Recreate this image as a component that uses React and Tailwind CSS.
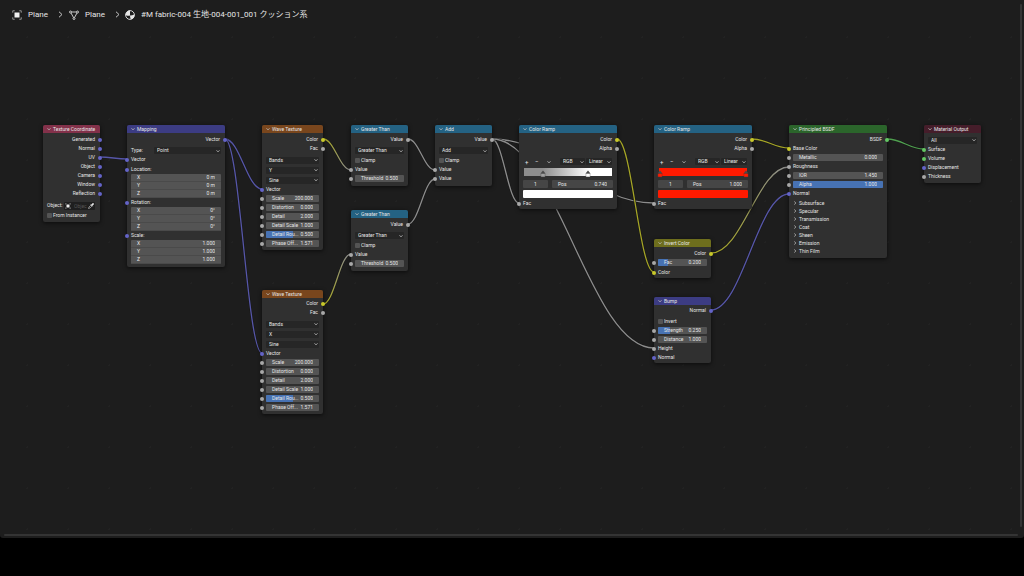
import React, { useId } from "react";

const SOCKET = {
  gray: "bg-[#a8a8a8]",
  vector: "bg-[#6464c8]",
  color: "bg-[#c8c82a]",
  shader: "bg-[#63c763]",
};

const WIRE = { gray: "#8c8c8c", vector: "#5656a8", color: "#a5a526", shader: "#4f9f4f" };

function Socket({ side, type }) {
  return (
    <span
      className={`absolute top-1/2 h-1 w-1 -translate-y-1/2 rounded-full ${
        side === "in" ? "-left-0.5" : "-right-0.5"
      } ${SOCKET[type]}`}
    />
  );
}

function Chevron({ className = "" }) {
  return (
    <svg viewBox="0 0 8 8" className={`h-1 w-1 shrink-0 ${className}`} fill="none" stroke="#bdbdbd" strokeWidth="1.6" aria-hidden="true">
      <path d="M1 2.5 4 5.8 7 2.5" />
    </svg>
  );
}

function Node({ x, y, width, title, head, tight, bottom = "pb-0.5", children }) {
  return (
    <section
      className={`absolute rounded-[2px] bg-[#303030] shadow-[0_1px_4px_rgba(0,0,0,0.65)] ${width} ${bottom}`}
      style={{ left: x, top: y }}
    >
      <button
        type="button"
        className={`flex h-2 w-full items-center gap-0.5 rounded-t-[2px] pl-1 text-left whitespace-nowrap ${head} ${tight ? "mb-px" : "mb-0.5"}`}
      >
        <Chevron />
        {title}
      </button>
      {children}
    </section>
  );
}

function Out({ type = "gray", children }) {
  return (
    <div className="relative flex h-[9px] items-center justify-end pr-[5px]">
      {children}
      <Socket side="out" type={type} />
    </div>
  );
}

function In({ type = "gray", className = "", children }) {
  return (
    <div className={`relative flex h-[9px] items-center pl-1 ${className}`}>
      {children}
      <Socket side="in" type={type} />
    </div>
  );
}

function Menu({ label, value, className = "" }) {
  return (
    <span className={`relative flex h-[7px] items-center rounded-[1px] bg-[#262626] ${className}`}>
      <select aria-label={label} defaultValue={value} className="h-[7px] w-full appearance-none bg-transparent pr-1 pl-[3px] outline-none">
        <option>{value}</option>
      </select>
      <Chevron className="pointer-events-none absolute right-px" />
    </span>
  );
}

function MenuRow({ label, value, className = "h-[10px]" }) {
  return (
    <div className={`flex items-center px-1 ${className}`}>
      <Menu label={label} value={value} className="flex-1" />
    </div>
  );
}

function Check({ children, className = "" }) {
  return (
    <label className={`flex h-[9px] items-center gap-px pl-1 whitespace-nowrap ${className}`}>
      <input type="checkbox" className="h-[5px] w-[5px] shrink-0 appearance-none rounded-[1px] bg-[#545454]" />
      {children}
    </label>
  );
}

function Field({ label, value, fill, className = "h-[7px] rounded-[1px]" }) {
  const id = useId();
  return (
    <span className={`relative flex w-full items-start overflow-hidden bg-[#545454] px-[6px] ${className}`}>
      {fill ? <span className="absolute inset-y-0 left-0 bg-[#4772b3]" style={{ width: `${fill * 100}%` }} /> : null}
      <label htmlFor={id} className="relative w-0 flex-1 leading-[6px] whitespace-nowrap">
        {label}
      </label>
      <input id={id} defaultValue={value} className="relative h-[6px] w-5 bg-transparent text-right leading-[6px] outline-none" />
    </span>
  );
}

function FieldRow({ label, value, fill }) {
  return (
    <div className="relative flex h-[9px] items-center px-1">
      <Field label={label} value={value} fill={fill} />
      <Socket side="in" type="gray" />
    </div>
  );
}

function VectorGroup({ values }) {
  return (
    <div className="mx-1 overflow-hidden rounded-[1px]">
      {["X", "Y", "Z"].map((axis, i) => (
        <Field key={axis} label={axis} value={values[i]} className="h-2 border-b border-[#4a4a4a]" />
      ))}
    </div>
  );
}

function WaveTexture({ x, y, direction, tight }) {
  return (
    <Node x={x} y={y} width="w-[61px]" title="Wave Texture" head="bg-[#79461d]" tight={tight}>
      <Out type="color">Color</Out>
      <Out>Fac</Out>
      <div className="pt-0.5">
        <MenuRow label="Wave type" value="Bands" />
        <MenuRow label="Direction" value={direction} />
        <MenuRow label="Profile" value="Sine" />
      </div>
      <In type="vector">Vector</In>
      <FieldRow label="Scale" value="200.000" />
      <FieldRow label="Distortion" value="0.000" />
      <FieldRow label="Detail" value="2.000" />
      <FieldRow label="Detail Scale" value="1.000" />
      <FieldRow label="Detail Rou..." value="0.500" fill={0.5} />
      <FieldRow label="Phase Off..." value="1.571" />
    </Node>
  );
}

function MathNode({ x, y, operation, children }) {
  return (
    <Node x={x} y={y} width="w-[57px]" title={operation} head="bg-[#246283]" bottom="pb-[3px]">
      <Out>Value</Out>
      <MenuRow label="Operation" value={operation} className="mt-0.5 h-[9px]" />
      <Check className="mt-px">Clamp</Check>
      <In>Value</In>
      {children}
    </Node>
  );
}

function Stop({ at, color }) {
  return (
    <svg viewBox="0 0 10 18" className="absolute top-px h-[9px] w-[5px] -translate-x-1/2" style={{ left: `${at * 100}%` }} aria-hidden="true">
      <path d="M5 3 10 9H0Z" fill="#4a4a4a" />
      <path d="M0.5 9h9v7h-9Z" fill={color} stroke="#3a3a3a" strokeWidth="1" />
    </svg>
  );
}

function ColorRamp({ x, y, pos, band, swatch, stops }) {
  const id = useId();
  return (
    <Node x={x} y={y} width="w-[98px]" title="Color Ramp" head="bg-[#246283]" bottom="pb-px">
      <Out type="color">Color</Out>
      <Out>Alpha</Out>
      <div className="mt-1 flex h-[9px] items-center pr-[5px] pl-[6px]">
        <button type="button" aria-label="Add stop" className="w-[10px] text-left text-[6px]">+</button>
        <button type="button" aria-label="Remove stop" className="w-3 text-left text-[6px]">−</button>
        <button type="button" aria-label="Ramp tools" className="flex-1"><Chevron /></button>
        <Menu label="Color mode" value="RGB" className="w-[25px]" />
        <Menu label="Interpolation" value="Linear" className="ml-px w-[26px]" />
      </div>
      <div className={`relative mx-[5px] mt-0.5 h-2 ${band}`}>
        {stops.map((s) => (
          <Stop key={s.at} at={s.at} color={s.color} />
        ))}
      </div>
      <div className="mt-1 flex gap-1 px-1">
        <span className="flex h-2 w-[25px] items-center rounded-[1px] bg-[#464646]">
          <input aria-label="Active stop" defaultValue="1" className="h-[6px] w-full bg-transparent text-center leading-[6px] outline-none" />
        </span>
        <span className="flex h-2 flex-1 items-center rounded-[1px] bg-[#464646] px-[6px]">
          <label htmlFor={id} className="flex-1 leading-[6px]">Pos</label>
          <input id={id} defaultValue={pos} className="h-[6px] w-5 bg-transparent text-right leading-[6px] outline-none" />
        </span>
      </div>
      <button type="button" aria-label="Stop color" className={`mx-1 mt-0.5 block h-2 w-[90px] rounded-[1px] ${swatch}`} />
      <In className="mt-px">Fac</In>
    </Node>
  );
}

function ObjectIcon({ className }) {
  return (
    <svg viewBox="0 0 20 20" className={className} fill="none" stroke="currentColor" strokeWidth="1.6" aria-hidden="true">
      <path d="M1.5 5.5v-4h4M14.5 1.5h4v4M18.5 14.5v4h-4M5.5 18.5h-4v-4" opacity="0.7" />
      <rect x="5" y="5" width="10" height="10" fill="#f0f0f0" stroke="none" />
    </svg>
  );
}

function MeshIcon() {
  return (
    <svg viewBox="0 0 20 20" className="h-[10px] w-[10px]" fill="none" stroke="currentColor" strokeWidth="1.7" aria-hidden="true">
      <path d="M5 4h10M4 6l5 9M16 6l-5 9" />
      <circle cx="3" cy="4" r="2" />
      <circle cx="17" cy="4" r="2" />
      <circle cx="10" cy="17" r="2" />
    </svg>
  );
}

function MaterialIcon() {
  return (
    <svg viewBox="0 0 20 20" className="h-[10px] w-[10px]" aria-hidden="true">
      <circle cx="10" cy="10" r="8.8" fill="#1d1d1d" stroke="#e6e6e6" strokeWidth="1.8" />
      <path d="M10 1.2A8.8 8.8 0 0 0 1.2 10q4.4 2.6 8.8 1.2Z" fill="#e6e6e6" />
      <path d="M10 11.2q4.6-.2 8.6-2.4A8.8 8.8 0 0 1 11.5 18.6Q10.2 15 10 11.2Z" fill="#e6e6e6" />
    </svg>
  );
}

function Separator() {
  return (
    <svg viewBox="0 0 10 14" className="h-[7px] w-[5px]" fill="none" stroke="#c4c4c4" strokeWidth="2" aria-hidden="true">
      <path d="M2 1.5 8 7 2 12.5" />
    </svg>
  );
}

const LINKS = [
  [100, 157, 127, 159, "vector", "vector"],
  [225, 139, 262, 189, "vector", "vector"],
  [225, 139, 262, 353, "vector", "vector"],
  [323, 139, 351, 170, "color", "gray"],
  [323, 304, 351, 254, "color", "gray"],
  [408, 139, 435, 170, "gray", "gray"],
  [408, 224, 435, 179, "gray", "gray"],
  [492, 139, 519, 203, "gray", "gray"],
  [492, 139, 654, 203, "gray", "gray"],
  [492, 139, 654, 348, "gray", "gray"],
  [617, 139, 654, 272, "color", "color"],
  [752, 139, 789, 148, "color", "color"],
  [711, 253, 789, 167, "color", "gray"],
  [711, 310, 789, 194, "vector", "vector"],
  [887, 139, 924, 149, "shader", "shader"],
];

function Links() {
  return (
    <svg className="absolute inset-0 h-full w-full" fill="none" aria-hidden="true">
      <defs>
        {LINKS.map(([x1, y1, x2, y2, a, b], i) => (
          <linearGradient key={i} id={`link${i}`} gradientUnits="userSpaceOnUse" x1={x1} y1={y1} x2={x2} y2={y2}>
            <stop offset="0" stopColor={WIRE[a]} />
            <stop offset="1" stopColor={WIRE[b]} />
          </linearGradient>
        ))}
      </defs>
      {LINKS.map(([x1, y1, x2, y2], i) => {
        const h = (x2 - x1) * 0.4;
        const d = `M${x1} ${y1}C${x1 + h} ${y1} ${x2 - h} ${y2} ${x2} ${y2}`;
        return (
          <g key={i}>
            <path d={d} stroke="#151515" strokeWidth="2.2" />
            <path d={d} stroke={`url(#link${i})`} strokeWidth="1.3" />
          </g>
        );
      })}
    </svg>
  );
}

const PANELS = ["Subsurface", "Specular", "Transmission", "Coat", "Sheen", "Emission", "Thin Film"];

export default function App() {
  return (
    <div className="flex h-screen flex-col bg-black font-[Roboto,'Noto_Sans_CJK_JP',sans-serif] text-[#e6e6e6]">
      <main className="relative flex-1 overflow-hidden rounded-b-[3px] bg-[#1d1d1d] bg-[radial-gradient(circle_at_center,#222222_1px,transparent_1px)] bg-[length:41px_41px] bg-[position:7px_17px]">
        <Links />
        <div className="text-[5px] leading-none">
          <Node x={43} y={125} width="w-[57px]" title="Texture Coordinate" head="bg-[#83314a]">
            {["Generated", "Normal", "UV", "Object", "Camera", "Window", "Reflection"].map((name) => (
              <Out key={name} type="vector">{name}</Out>
            ))}
            <div className="mt-[3px] flex h-[9px] items-center justify-between pr-[5px] pl-1">
              <label htmlFor="object">Object:</label>
              <span className="flex h-2 w-[31px] items-center gap-px rounded-[1px] bg-[#1f1f1f] px-px">
                <ObjectIcon className="h-[6px] w-[6px] shrink-0" />
                <input id="object" placeholder="Objec" className="h-[6px] w-0 flex-1 bg-transparent pl-0.5 outline-none placeholder:text-[#555555]" />
                <svg viewBox="0 0 12 12" className="h-[6px] w-[6px] shrink-0" aria-hidden="true">
                  <path d="M1 11 2 8 6 4l2 2-4 4Z" fill="none" stroke="#cfcfcf" strokeWidth="1.2" />
                  <path d="M5.5 3 7 3.5 9 1a1.4 1.4 0 0 1 2 2L8.5 5 9 6.5Z" fill="#e6e6e6" stroke="#e6e6e6" />
                </svg>
              </span>
            </div>
            <Check className="mt-px">From Instancer</Check>
          </Node>

          <Node x={127} y={125} width="w-[98px]" title="Mapping" head="bg-[#3c3c83]" bottom="pb-[3px]">
            <Out type="vector">Vector</Out>
            <div className="mt-0.5 flex h-[9px] items-center justify-between px-1">
              <span>Type:</span>
              <Menu label="Type" value="Point" className="w-[67px]" />
            </div>
            <In type="vector">Vector</In>
            <In type="vector" className="mt-px">Location:</In>
            <VectorGroup values={["0 m", "0 m", "0 m"]} />
            <In type="vector">Rotation:</In>
            <VectorGroup values={["0°", "0°", "0°"]} />
            <In type="vector">Scale:</In>
            <VectorGroup values={["1.000", "1.000", "1.000"]} />
          </Node>

          <WaveTexture x={262} y={125} direction="Y" />
          <WaveTexture x={262} y={290} direction="X" tight />

          <MathNode x={351} y={125} operation="Greater Than">
            <FieldRow label="Threshold" value="0.500" />
          </MathNode>
          <MathNode x={351} y={210} operation="Greater Than">
            <FieldRow label="Threshold" value="0.500" />
          </MathNode>
          <MathNode x={435} y={125} operation="Add">
            <In>Value</In>
          </MathNode>

          <ColorRamp
            x={519}
            y={125}
            pos="0.740"
            band="bg-[linear-gradient(to_right,#8e8e8e_21%,#ffffff_74%)]"
            swatch="bg-white"
            stops={[{ at: 0.22, color: "#a0a0a0" }, { at: 0.73, color: "#ffffff" }]}
          />
          <ColorRamp
            x={654}
            y={125}
            pos="1.000"
            band="bg-[#ff1a00]"
            swatch="bg-[#ff1a00]"
            stops={[{ at: 0.01, color: "#ff1a00" }, { at: 0.99, color: "#ff1a00" }]}
          />

          <Node x={654} y={239} width="w-[57px]" title="Invert Color" head="bg-[#6e6e1d]" bottom="pb-px">
            <Out type="color">Color</Out>
            <FieldRow label="Fac" value="0.200" fill={0.2} />
            <In type="color" className="mt-px">Color</In>
          </Node>

          <Node x={654} y={297} width="w-[57px]" title="Bump" head="bg-[#3c3c83]" bottom="pb-px" tight>
            <Out type="vector">Normal</Out>
            <Check className="mt-0.5">Invert</Check>
            <FieldRow label="Strength" value="0.250" fill={0.25} />
            <FieldRow label="Distance" value="1.000" />
            <In>Height</In>
            <In type="vector">Normal</In>
          </Node>

          <Node x={789} y={125} width="w-[98px]" title="Principled BSDF" head="bg-[#2b652b]" bottom="pb-[3px]">
            <Out type="shader">BSDF</Out>
            <In type="color">Base Color</In>
            <FieldRow label="Metallic" value="0.000" />
            <In>Roughness</In>
            <FieldRow label="IOR" value="1.450" />
            <FieldRow label="Alpha" value="1.000" fill={1} />
            <In type="vector">Normal</In>
            <div className="mt-px">
              {PANELS.map((name) => (
                <button key={name} type="button" className="flex h-2 w-full items-center gap-0.5 pl-1 text-left">
                  <Chevron className="-rotate-90" />
                  {name}
                </button>
              ))}
            </div>
          </Node>

          <Node x={924} y={125} width="w-[57px]" title="Material Output" head="bg-[#451d2a]">
            <MenuRow label="Target" value="All" />
            <In type="shader">Surface</In>
            <In type="shader">Volume</In>
            <In type="vector">Displacement</In>
            <In>Thickness</In>
          </Node>
        </div>

        <nav aria-label="Path" className="absolute top-0 left-0 flex h-[29px] items-center pl-3 text-[8px] leading-none whitespace-nowrap">
          <ObjectIcon className="mr-1.5 h-[10px] w-[10px]" />
          <a href="#object" className="w-[30px]">Plane</a>
          <Separator />
          <span className="w-1.5" />
          <MeshIcon />
          <a href="#mesh" className="ml-1.5 w-[30px]">Plane</a>
          <Separator />
          <span className="w-[5px]" />
          <MaterialIcon />
          <a href="#material" className="ml-1.5">#M fabric-004 生地-004-001_001 クッション系</a>
        </nav>

        <div className="absolute top-1 right-0.5 bottom-[11px] w-0.5 rounded-full bg-[#343434]" />
        <div className="absolute right-[6px] bottom-0.5 left-1 h-0.5 rounded-full bg-[#343434]" />
      </main>
      <footer className="h-[38px] shrink-0 bg-black" />
    </div>
  );
}
